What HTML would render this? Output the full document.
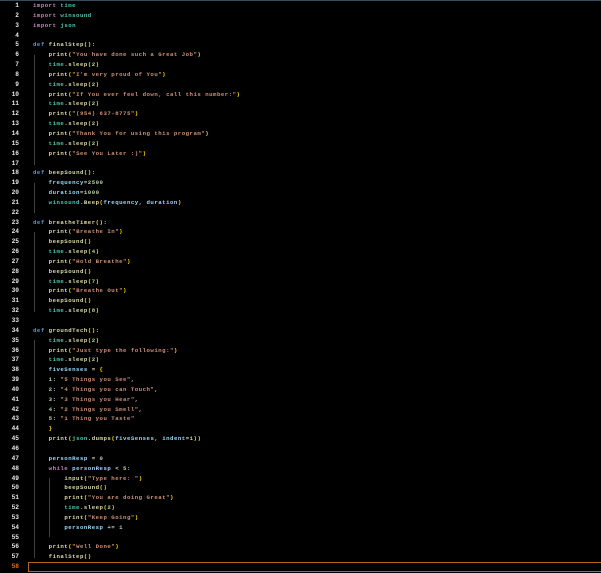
<!DOCTYPE html>
<html><head><meta charset="utf-8"><style>
html,body{margin:0;padding:0;background:#000;width:601px;height:573px;overflow:hidden}
body{border-top:1px solid #3a4a5a;box-sizing:border-box;position:relative}
.g{position:absolute;left:0;top:0px;width:19px;text-align:right;font:bold 6.2px/9.84px "Liberation Mono",monospace;color:#e8e8e8}
.c{position:absolute;left:33px;top:0px;font:bold 5.7px/9.84px "Liberation Mono",monospace;letter-spacing:0.5px;color:#d4d4d4;white-space:pre}
.k{color:#c586c0}.d{color:#569cd6}.f{color:#dcdcaa}.s{color:#ce9178}.v{color:#9cdcfe}.m{color:#4ec9b0}.b{color:#ffd700}.n{color:#b5cea8}
.cur{position:absolute;left:28px;top:561px;width:580px;height:10px;border:1px solid #b5651d;box-sizing:border-box}
.ig{position:absolute;width:1px;background:#404040}
</style></head><body>
<div class="g">1<br>2<br>3<br>4<br>5<br>6<br>7<br>8<br>9<br>10<br>11<br>12<br>13<br>14<br>15<br>16<br>17<br>18<br>19<br>20<br>21<br>22<br>23<br>24<br>25<br>26<br>27<br>28<br>29<br>30<br>31<br>32<br>33<br>34<br>35<br>36<br>37<br>38<br>39<br>40<br>41<br>42<br>43<br>44<br>45<br>46<br>47<br>48<br>49<br>50<br>51<br>52<br>53<br>54<br>55<br>56<br>57<br><span style="color:#e07020">58</span></div>
<div class="ig" style="left:34px;top:54px;height:110px"></div>
<div class="ig" style="left:34px;top:182px;height:30px"></div>
<div class="ig" style="left:34px;top:231px;height:80px"></div>
<div class="ig" style="left:34px;top:339px;height:218px"></div>
<div class="ig" style="left:49px;top:477px;height:59px"></div>
<div class="cur"></div>
<div class="c"><span class="k">import</span> <span class="m">time</span>
<span class="k">import</span> <span class="m">winsound</span>
<span class="k">import</span> <span class="m">json</span>

<span class="d">def</span> <span class="f">finalStep</span><span class="b">()</span>:
    <span class="f">print</span><span class="b">(</span><span class="s">"You have done such a Great Job"</span><span class="b">)</span>
    <span class="m">time</span>.<span class="f">sleep</span><span class="b">(</span><span class="n">2</span><span class="b">)</span>
    <span class="f">print</span><span class="b">(</span><span class="s">"I'm very proud of You"</span><span class="b">)</span>
    <span class="m">time</span>.<span class="f">sleep</span><span class="b">(</span><span class="n">2</span><span class="b">)</span>
    <span class="f">print</span><span class="b">(</span><span class="s">"If You ever feel down, call this number:"</span><span class="b">)</span>
    <span class="m">time</span>.<span class="f">sleep</span><span class="b">(</span><span class="n">2</span><span class="b">)</span>
    <span class="f">print</span><span class="b">(</span><span class="s">"(954) 637-8775"</span><span class="b">)</span>
    <span class="m">time</span>.<span class="f">sleep</span><span class="b">(</span><span class="n">2</span><span class="b">)</span>
    <span class="f">print</span><span class="b">(</span><span class="s">"Thank You for using this program"</span><span class="b">)</span>
    <span class="m">time</span>.<span class="f">sleep</span><span class="b">(</span><span class="n">2</span><span class="b">)</span>
    <span class="f">print</span><span class="b">(</span><span class="s">"See You Later :)"</span><span class="b">)</span>

<span class="d">def</span> <span class="f">beepSound</span><span class="b">()</span>:
    <span class="v">frequency</span>=<span class="n">2500</span>
    <span class="v">duration</span>=<span class="n">1000</span>
    <span class="m">winsound</span>.<span class="f">Beep</span><span class="b">(</span><span class="v">frequency</span>, <span class="v">duration</span><span class="b">)</span>

<span class="d">def</span> <span class="f">breatheTimer</span><span class="b">()</span>:
    <span class="f">print</span><span class="b">(</span><span class="s">"Breathe In"</span><span class="b">)</span>
    <span class="f">beepSound</span><span class="b">()</span>
    <span class="m">time</span>.<span class="f">sleep</span><span class="b">(</span><span class="n">4</span><span class="b">)</span>
    <span class="f">print</span><span class="b">(</span><span class="s">"Hold Breathe"</span><span class="b">)</span>
    <span class="f">beepSound</span><span class="b">()</span>
    <span class="m">time</span>.<span class="f">sleep</span><span class="b">(</span><span class="n">7</span><span class="b">)</span>
    <span class="f">print</span><span class="b">(</span><span class="s">"Breathe Out"</span><span class="b">)</span>
    <span class="f">beepSound</span><span class="b">()</span>
    <span class="m">time</span>.<span class="f">sleep</span><span class="b">(</span><span class="n">8</span><span class="b">)</span>

<span class="d">def</span> <span class="f">groundTech</span><span class="b">()</span>:
    <span class="m">time</span>.<span class="f">sleep</span><span class="b">(</span><span class="n">2</span><span class="b">)</span>
    <span class="f">print</span><span class="b">(</span><span class="s">"Just type the following:"</span><span class="b">)</span>
    <span class="m">time</span>.<span class="f">sleep</span><span class="b">(</span><span class="n">2</span><span class="b">)</span>
    <span class="v">fiveSenses</span> = <span class="b">{</span>
    <span class="n">1</span>: <span class="s">"5 Things you See"</span>,
    <span class="n">2</span>: <span class="s">"4 Things you can Touch"</span>,
    <span class="n">3</span>: <span class="s">"3 Things you Hear"</span>,
    <span class="n">4</span>: <span class="s">"2 Things you Smell"</span>,
    <span class="n">5</span>: <span class="s">"1 Thing you Taste"</span>
    <span class="b">}</span>
    <span class="f">print</span><span class="b">(</span><span class="m">json</span>.<span class="f">dumps</span><span class="b">(</span><span class="v">fiveSenses</span>, <span class="v">indent</span>=<span class="n">1</span><span class="b">))</span>

    <span class="v">personResp</span> = <span class="n">0</span>
    <span class="k">while</span> <span class="v">personResp</span> &lt; <span class="n">5</span>:
        <span class="f">input</span><span class="b">(</span><span class="s">"Type here: "</span><span class="b">)</span>
        <span class="f">beepSound</span><span class="b">()</span>
        <span class="f">print</span><span class="b">(</span><span class="s">"You are doing Great"</span><span class="b">)</span>
        <span class="m">time</span>.<span class="f">sleep</span><span class="b">(</span><span class="n">2</span><span class="b">)</span>
        <span class="f">print</span><span class="b">(</span><span class="s">"Keep Going"</span><span class="b">)</span>
        <span class="v">personResp</span> += <span class="n">1</span>

    <span class="f">print</span><span class="b">(</span><span class="s">"Well Done"</span><span class="b">)</span>
    <span class="f">finalStep</span><span class="b">()</span>
</div>
</body></html>
